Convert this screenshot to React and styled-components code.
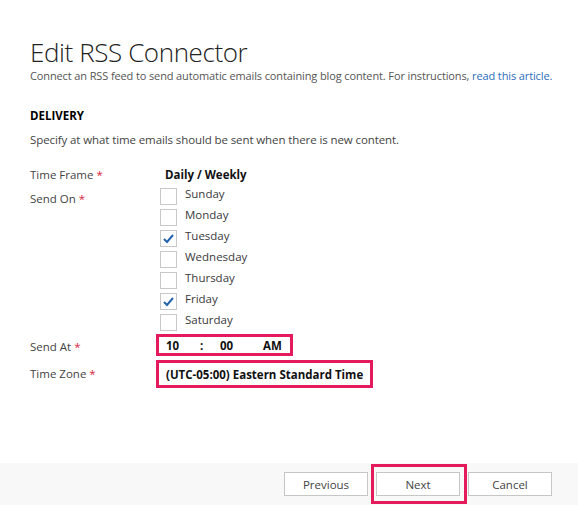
import React from "react";
import styled, { createGlobalStyle } from "styled-components";

const GlobalStyle = createGlobalStyle`
  html, body {
    margin: 0;
    padding: 0;
    background: #fff;
  }
  body {
    font-family: "Open Sans", "Noto Sans", sans-serif;
    color: #444;
  }
`;

const Page = styled.div`
  display: flex;
  flex-direction: column;
  width: 578px;
  height: 505px;
  overflow: hidden;
`;

const Content = styled.div`
  flex: 1;
  padding: 0 30px;
`;

const Title = styled.h1`
  margin: 36px 0 0;
  font-size: 26px;
  font-weight: 300;
  letter-spacing: -0.4px;
  line-height: 32px;
  color: #222;
`;

const Subtitle = styled.p`
  margin: 0;
  font-size: 11px;
  letter-spacing: -0.12px;
  line-height: 16px;
  white-space: nowrap;
  color: #555;
  a {
    color: #2a6ebb;
    text-decoration: none;
  }
`;

const SectionTitle = styled.h2`
  margin: 24px 0 0;
  font-size: 11.5px;
  font-weight: 700;
  line-height: 16px;
  color: #000;
`;

const SectionNote = styled.p`
  margin: 8px 0 0;
  font-size: 11.5px;
  letter-spacing: -0.1px;
  line-height: 16px;
  color: #444;
`;

const Form = styled.div`
  display: grid;
  grid-template-columns: 126px 1fr;
  row-gap: 3px;
  margin-top: 18px;
`;

const Label = styled.div`
  font-size: 11.5px;
  line-height: 18px;
  padding-top: ${(p) => p.$top || 0}px;
  color: #444;
  span {
    color: #d7263d;
  }
`;

const Value = styled.div`
  font-size: 11.5px;
  font-weight: 700;
  line-height: 18px;
  color: #111;
  padding-left: ${(p) => p.$indent || 0}px;
`;

const Days = styled.div`
  display: flex;
  flex-direction: column;
  gap: 4px;
  padding-left: 4px;
  margin-top: -2px;
`;

const DayRow = styled.label`
  display: flex;
  align-items: center;
  gap: 8px;
  height: 17px;
  font-size: 11.5px;
  font-weight: 500;
  color: #3a3a3a;
`;

const Box = styled.span`
  display: inline-flex;
  align-items: center;
  justify-content: center;
  width: 15px;
  height: 15px;
  border: 1px solid #c8c8c8;
  background: #fff;
  margin-top: 5px;
`;

const Marked = styled.div`
  display: inline-flex;
  align-items: center;
  align-self: start;
  justify-self: start;
  border: 3px solid #e31b5c;
  padding: 0 7px;
  height: ${(p) => p.$h}px;
  margin-top: ${(p) => p.$top || 0}px;
  box-sizing: border-box;
  font-size: 11.5px;
  font-weight: 700;
  color: #111;
`;

const TimePart = styled.span`
  width: ${(p) => p.$w}px;
`;

const Footer = styled.div`
  display: flex;
  justify-content: flex-end;
  align-items: center;
  gap: 8px;
  height: 42px;
  padding-right: 26px;
  background: #f8f8f8;
`;

const Button = styled.button`
  width: 84px;
  height: 24px;
  border: 1px solid #c6c6c6;
  background: #fff;
  font-family: inherit;
  font-size: 11.5px;
  color: #444;
  padding: 0;
`;

const Highlight = styled.div`
  position: relative;
  display: flex;
  &::after {
    content: "";
    position: absolute;
    inset: -8px -7px -8px -5px;
    border: 3px solid #e31b5c;
    pointer-events: none;
  }
`;

const days = [
  { name: "Sunday", on: false },
  { name: "Monday", on: false },
  { name: "Tuesday", on: true },
  { name: "Wednesday", on: false },
  { name: "Thursday", on: false },
  { name: "Friday", on: true },
  { name: "Saturday", on: false },
];

function Check() {
  return (
    <svg width="13" height="13" viewBox="0 0 13 13">
      <polyline
        points="2,7 5,10 11,3"
        fill="none"
        stroke="#2563ad"
        strokeWidth="2"
      />
    </svg>
  );
}

export default function App() {
  return (
    <Page>
      <GlobalStyle />
      <Content>
        <Title>Edit RSS Connector</Title>
        <Subtitle>
          Connect an RSS feed to send automatic emails containing blog content. For instructions,{" "}
          <a href="#">read this article.</a>
        </Subtitle>
        <SectionTitle>DELIVERY</SectionTitle>
        <SectionNote>Specify at what time emails should be sent when there is new content.</SectionNote>
        <Form>
          <Label>
            Time Frame <span>*</span>
          </Label>
          <Value $indent={9}>Daily / Weekly</Value>
          <Label $top={3}>
            Send On <span>*</span>
          </Label>
          <Days>
            {days.map((d) => (
              <DayRow key={d.name}>
                <Box>{d.on && <Check />}</Box>
                {d.name}
              </DayRow>
            ))}
          </Days>
          <Label $top={7}>
            Send At <span>*</span>
          </Label>
          <Marked $h={22} $top={3}>
            <TimePart $w={34}>10</TimePart>
            <TimePart $w={20}>:</TimePart>
            <TimePart $w={43}>00</TimePart>
            <TimePart $w={20}>AM</TimePart>
          </Marked>
          <Label $top={6}>
            Time Zone <span>*</span>
          </Label>
          <Marked $h={28} $top={1}>(UTC-05:00) Eastern Standard Time</Marked>
        </Form>
      </Content>
      <Footer>
        <Button>Previous</Button>
        <Highlight>
          <Button>Next</Button>
        </Highlight>
        <Button>Cancel</Button>
      </Footer>
    </Page>
  );
}
